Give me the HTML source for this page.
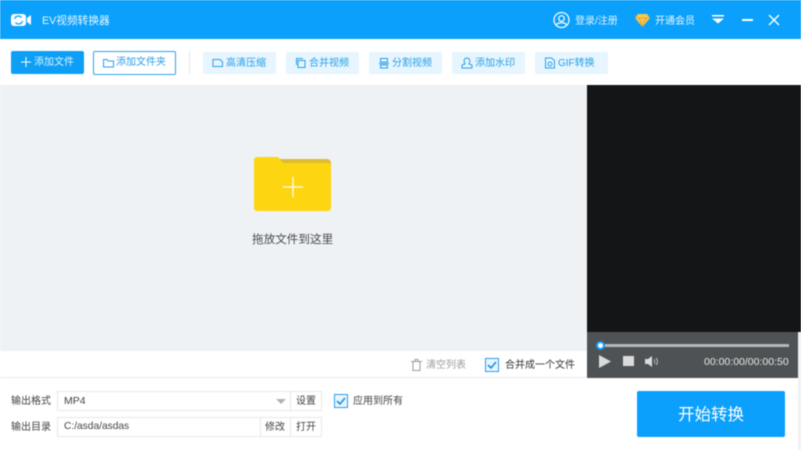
<!DOCTYPE html>
<html><head><meta charset="utf-8">
<style>
html,body{margin:0;padding:0;width:801px;height:450px;overflow:hidden;background:#fff}
body{font-family:"Liberation Sans","Noto Sans CJK SC",sans-serif;position:relative;filter:blur(.4px)}
.a{position:absolute;white-space:nowrap;line-height:1}
.t{position:absolute;top:52px;height:22px;background:#e6f5fe;border-radius:2px;color:#2a9fe8;font-size:10px;line-height:22px;white-space:nowrap}
.t svg{position:absolute;left:9px;top:5px}
.t span{position:absolute;left:23px;top:1px}
svg{display:block}
</style></head><body>
<div class="a" style="left:0;top:0;width:801px;height:39px;background:#0aa0fc"></div>
<svg class="a" style="left:11px;top:13px" width="21" height="14" viewBox="0 0 21 14"><rect x="0" y="1" width="15" height="12" rx="3" fill="#fff"/><path d="M16 5l4-3v10l-4-3z" fill="#fff"/><path d="M3.500 6a4 4 0 0 1 7-1.500M11.500 8a4 4 0 0 1-7 1.500" stroke="#0aa0fc" stroke-width="1.300" fill="none"/></svg>
<div class="a" style="left:42px;top:16px;font-size:10.700px;color:#e8f6ff">EV视频转换器</div>
<svg class="a" style="left:553px;top:11px" width="17" height="18" viewBox="0 0 17 18" fill="none" stroke="#fff" stroke-width="1.200"><circle cx="8.500" cy="9" r="7.500"/><circle cx="8.500" cy="7.500" r="2.800"/><path d="M3.500 14c1-3 9-3 10 0"/></svg>
<div class="a" style="left:575px;top:17px;font-size:10px;color:#e0f3ff">登录/注册</div>
<svg class="a" style="left:635px;top:14px" width="15" height="13" viewBox="0 0 15 13"><path d="M3 0h9l3 4-7.500 9L0 4z" fill="#f9c74f"/><path d="M0 4h15M4 4l3.500 8L11 4" stroke="#e79a1e" stroke-width=".8" fill="none"/></svg>
<div class="a" style="left:655px;top:17px;font-size:10px;color:#e8f6ff">开通会员</div>
<svg class="a" style="left:712px;top:15px" width="12" height="9" viewBox="0 0 12 9"><rect width="12" height="1.500" fill="#fff"/><path d="M0 3.500h12L6 8.500z" fill="#fff"/></svg>
<div class="a" style="left:742px;top:19px;width:11px;height:1.500px;background:#fff"></div>
<svg class="a" style="left:768px;top:14px" width="12" height="12" viewBox="0 0 12 12"><path d="M1 1l10 10M11 1L1 11" stroke="#fff" stroke-width="1.400"/></svg>

<div class="a" style="left:11px;top:51px;width:73px;height:23px;background:#0d9ff5;border-radius:2px"></div>
<svg class="a" style="left:21px;top:57px" width="10" height="10"><path d="M5 0v10M0 5h10" stroke="#fff" stroke-width="1"/></svg>
<div class="a" style="left:34px;top:58px;font-size:10px;color:#dff3ff">添加文件</div>
<div class="a" style="left:93px;top:51px;width:81px;height:22px;border:1px solid #2fa3e8;border-radius:2px"></div>
<svg class="a" style="left:103px;top:58px" width="11" height="10" fill="none" stroke="#2a9fe8"><path d="M.500 1.500h3.500l1 1.500h5.500v6h-10z"/></svg>
<div class="a" style="left:116px;top:58px;font-size:10px;color:#2a9fe8">添加文件夹</div>
<div class="a" style="left:189px;top:51px;width:1px;height:23px;background:#e4e8ec"></div>

<div class="t" style="left:203px;width:73px"><svg width="12" height="12" fill="none" stroke="#2a9fe8"><path d="M1 2.500h7l2.500 2.500v4.500H1z"/></svg><span>高清压缩</span></div>
<div class="t" style="left:286px;width:73px"><svg width="12" height="12" fill="none" stroke="#2a9fe8"><rect x="3" y="3.500" width="7" height="7"/><path d="M1.500 8V1.500H8"/></svg><span>合并视频</span></div>
<div class="t" style="left:369px;width:73px"><svg width="12" height="12" fill="none" stroke="#2a9fe8"><rect x="2.500" y="1.500" width="7" height="3.500"/><path d="M1 6.500h10"/><rect x="2.500" y="8" width="7" height="3"/></svg><span>分割视频</span></div>
<div class="t" style="left:452px;width:73px"><svg width="12" height="12" fill="none" stroke="#2a9fe8"><path d="M4 7c-2-4 0-6 2-6s4 2 2 6l3 1v3H1V8z"/></svg><span>添加水印</span></div>
<div class="t" style="left:535px;width:73px"><svg width="12" height="12" fill="none" stroke="#2a9fe8"><path d="M1.500 1h6l3 2.500V11h-9z"/><circle cx="6" cy="7" r="2"/></svg><span>GIF转换</span></div>

<div class="a" style="left:0;top:85px;width:587px;height:266px;background:#eff2f5"></div>
<div class="a" style="left:587px;top:85px;width:214px;height:247px;background:#131517"></div>
<div class="a" style="left:587px;top:332px;width:211px;height:46px;background:#4f5254"></div>
<div class="a" style="left:798px;top:332px;width:3px;height:118px;background:#eef1f4"></div>

<svg class="a" style="left:254px;top:157px" width="77" height="54" viewBox="0 0 77 54"><path d="M24 2h49a4 4 0 0 1 4 4v5H24z" fill="#dcbc34"/><path d="M3 0h21l5 6h45a3 3 0 0 1 3 3v42a3 3 0 0 1-3 3H3a3 3 0 0 1-3-3V3a3 3 0 0 1 3-3z" fill="#fed511"/><path d="M39 20v20M29 30h20" stroke="#fff" stroke-width="1.300"/></svg>
<div class="a" style="left:252px;top:234px;font-size:11.600px;color:#4a4a4a">拖放文件到这里</div>

<svg class="a" style="left:411px;top:359px" width="11" height="12" fill="none" stroke="#9a9a9a"><path d="M0 2.500h11M4 2.500V.5h3v2M2 2.500V11.500h7V2.500"/></svg>
<div class="a" style="left:426px;top:361px;font-size:10px;color:#9c9c9c">清空列表</div>
<div class="a" style="left:485px;top:358px;width:12px;height:12px;border:1px solid #2a9fe8;background:#eaf5fd"></div>
<svg class="a" style="left:485px;top:358px" width="14" height="14" fill="none"><path d="M3 7l3 3 5-6" stroke="#1592e6" stroke-width="1.600"/></svg>
<div class="a" style="left:505px;top:361px;font-size:10px;color:#333">合并成一个文件</div>

<div class="a" style="left:597px;top:344px;width:192px;height:3px;background:#b4b8ba"></div>
<div class="a" style="left:596px;top:341px;width:5px;height:5px;background:#fff;border:2px solid #0f9df8;border-radius:50%"></div>
<svg class="a" style="left:599px;top:355px" width="12" height="13"><path d="M0 0l12 6.500L0 13z" fill="#d9dbdc"/></svg>
<div class="a" style="left:623px;top:356px;width:11px;height:10px;background:#d9dbdc"></div>
<svg class="a" style="left:645px;top:356px" width="15" height="11" fill="none"><path d="M0 3h3l4-3v11L3 8H0z" fill="#d9dbdc"/><path d="M9 3.500a3 3 0 0 1 0 4M11 2a5 5 0 0 1 0 7" stroke="#b9bcbe"/></svg>
<div class="a" style="left:704px;top:357px;font-size:10.500px;color:#e4e6e7">00:00:00/00:00:50</div>

<div class="a" style="left:0;top:377px;width:587px;height:1px;background:#e8ebee"></div>
<div class="a" style="left:11px;top:397px;font-size:10px;color:#444">输出格式</div>
<div class="a" style="left:11px;top:423px;font-size:10px;color:#444">输出目录</div>
<div class="a" style="left:57px;top:391px;width:263px;height:18px;border:1px solid #e6e8ea"></div>
<div class="a" style="left:57px;top:417px;width:263px;height:18px;border:1px solid #e6e8ea"></div>
<div class="a" style="left:290px;top:391px;width:1px;height:20px;background:#e6e8ea"></div>
<div class="a" style="left:290px;top:417px;width:1px;height:20px;background:#e6e8ea"></div>
<div class="a" style="left:260px;top:417px;width:1px;height:20px;background:#e6e8ea"></div>
<div class="a" style="left:64px;top:396px;font-size:10.500px;color:#444">MP4</div>
<div class="a" style="left:64px;top:422px;font-size:10.200px;color:#444">C:/asda/asdas</div>
<svg class="a" style="left:276px;top:399px" width="10" height="5"><path d="M0 0h10L5 5z" fill="#aeb2b5"/></svg>
<div class="a" style="left:296px;top:397px;font-size:10px;color:#444">设置</div>
<div class="a" style="left:265px;top:423px;font-size:10px;color:#444">修改</div>
<div class="a" style="left:296px;top:423px;font-size:10px;color:#444">打开</div>
<div class="a" style="left:334px;top:394px;width:12px;height:12px;border:1px solid #2a9fe8;background:#eaf5fd"></div>
<svg class="a" style="left:334px;top:394px" width="14" height="14" fill="none"><path d="M3 7l3 3 5-6" stroke="#1592e6" stroke-width="1.600"/></svg>
<div class="a" style="left:353px;top:397px;font-size:10px;color:#444">应用到所有</div>
<div class="a" style="left:637px;top:391px;width:148px;height:46px;background:#0aa0fc;border-radius:2px;color:#fff;font-size:16.500px;line-height:48px;text-align:center">开始转换</div>
</body></html>
